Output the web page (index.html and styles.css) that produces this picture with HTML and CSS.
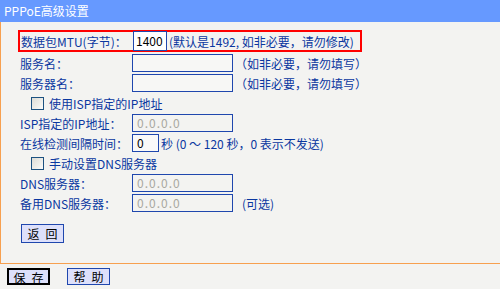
FILE: index.html
```html
<!DOCTYPE html>
<html>
<head>
<meta charset="utf-8">
<link rel="stylesheet" href="styles.css">
</head>
<body>
<div class="header">PPPoE高级设置</div>
<div class="main">
  <div class="row row-mtu">
    <span class="label">数据包MTU(字节)：</span>
    <span class="input short">1400</span>
    <span class="note">(默认是1492, 如非必要，请勿修改)</span>
  </div>
  <div class="row">
    <span class="label">服务名：</span>
    <span class="input"></span>
    <span class="note">（如非必要，请勿填写）</span>
  </div>
  <div class="row">
    <span class="label">服务器名：</span>
    <span class="input"></span>
    <span class="note">（如非必要，请勿填写）</span>
  </div>
  <div class="row check-row">
    <span class="checkbox"></span>
    <span class="text">使用ISP指定的IP地址</span>
  </div>
  <div class="row">
    <span class="label">ISP指定的IP地址：</span>
    <span class="input disabled">0.0.0.0</span>
  </div>
  <div class="row">
    <span class="label">在线检测间隔时间：</span>
    <span class="input tiny">0</span>
    <span class="note">秒 (0 ～ 120 秒，0 表示不发送)</span>
  </div>
  <div class="row check-row">
    <span class="checkbox"></span>
    <span class="text">手动设置DNS服务器</span>
  </div>
  <div class="row">
    <span class="label">DNS服务器：</span>
    <span class="input disabled">0.0.0.0</span>
  </div>
  <div class="row">
    <span class="label">备用DNS服务器：</span>
    <span class="input disabled">0.0.0.0</span>
    <span class="note opt">(可选)</span>
  </div>
  <div class="back-wrap"><button class="btn">返&ensp;回</button></div>
</div>
<div class="footer">
  <button class="btn focus">保&ensp;存</button>
  <button class="btn">帮&ensp;助</button>
</div>
</body>
</html>
```

FILE: styles.css
```css
html, body {
  margin: 0;
  padding: 0;
  background: #f3f3f1;
  font-family: "Noto Sans CJK SC", "Noto Sans", sans-serif;
  font-size: 12px;
  color: #0a37a0;
}
.header {
  height: 22px;
  line-height: 22px;
  background: #6699ff;
  color: #fff;
  padding-left: 4px;
  font-size: 12px;
}
.main {
  height: 233px;
  border-left: 1px solid #f7a04f;
  border-bottom: 1px solid #f7a04f;
  padding-top: 8px;
}
.row {
  display: flex;
  align-items: center;
  height: 20px;
  margin-left: 19px;
}
.row-mtu {
  box-sizing: border-box;
  height: 22px;
  width: 344px;
  margin-left: 17px;
  border: 2px solid #ff0000;
  margin-bottom: 1px;
}
.label {
  width: 112px;
  flex: none;
  white-space: nowrap;
}
.row-mtu .label {
  width: 112px;
  margin-left: 1px;
}
.input {
  box-sizing: border-box;
  height: 18px;
  width: 101px;
  border: 1px solid #1f47ae;
  background: #f7f7f5;
  color: #000;
  line-height: 16px;
  padding-left: 4px;
  flex: none;
}
.input.short {
  width: 34px;
  height: 20px;
  line-height: 18px;
  padding-left: 2px;
  background: #fff;
}
.input.tiny {
  width: 27px;
  background: #f9f9f9;
}
.input.disabled {
  color: #a8a8a0;
  background: #f3f3f1;
  letter-spacing: 1px;
}
.note {
  margin-left: 2px;
  white-space: nowrap;
}
.note.opt {
  margin-left: 9px;
}
.check-row {
  margin-left: 30px;
}
.checkbox {
  box-sizing: border-box;
  width: 13px;
  height: 13px;
  border: 1px solid #1c5180;
  background: linear-gradient(135deg, #dcdcd6, #fbfbf9);
  margin-right: 5px;
}
.back-wrap {
  margin-left: 20px;
  margin-top: 11px;
}
.btn {
  box-sizing: border-box;
  height: 19px;
  width: 43px;
  padding: 0;
  border: 1px solid #1f47ae;
  background: #dde0fb;
  color: #000;
  font-family: "Noto Sans CJK SC", sans-serif;
  font-size: 12px;
  line-height: 17px;
}
.footer {
  display: flex;
  gap: 17px;
  padding-left: 7px;
  padding-top: 4px;
}
.footer .btn {
  height: 17px;
  line-height: 15px;
}
.btn.focus {
  border: 2px solid #000;
}
```
